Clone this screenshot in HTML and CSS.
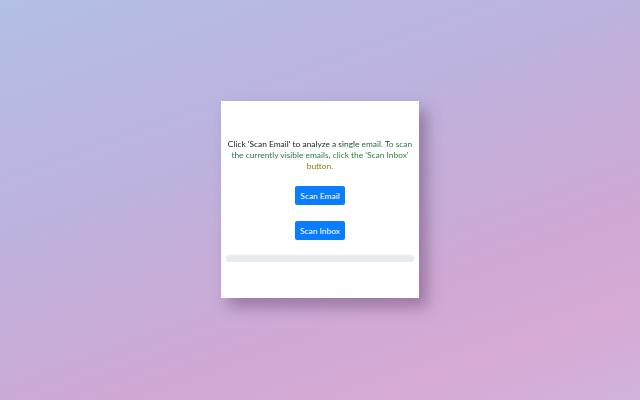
FILE: index.html
```html
<!DOCTYPE html>
<html lang="en">
<head>
    <meta charset="UTF-8">
    <title>Email Scanner</title>
    <link rel="stylesheet" href="styles.css">
</head>
<body>
    <div class="popup">
        <p class="intro">Click 'Scan Email' to analyze a single email. To scan the currently visible emails, click the 'Scan Inbox' button.</p>
        <div class="actions">
            <button class="btn">Scan Email</button>
            <button class="btn">Scan Inbox</button>
        </div>
        <div class="progress"></div>
    </div>
</body>
</html>
```

FILE: styles.css
```css
html, body {
    height: 100%;
}
body {
    margin: 0;
    font-family: "Lato", "Noto Sans", sans-serif;
    display: flex;
    align-items: center;
    justify-content: center;
    background: linear-gradient(160deg, #b3bfe6 0%, #bcb3de 35%, #cfa9d4 70%, #d6aad4 85%, #d0b3dc 100%);
}
.popup {
    width: 198px;
    height: 197px;
    box-sizing: border-box;
    background-color: #fff;
    padding: 38px 5px 0;
    box-shadow: 8px 9px 14px rgba(90, 60, 100, 0.45);
    margin-top: -1px;
}
.intro {
    margin: 0;
    font-size: 8.4px;
    line-height: 11px;
    text-align: center;
    color: #1d3a2b;
    background: linear-gradient(176deg, #1a1a1a 29%, #1c6f4a 33%, #2a7a2e 62%, #857800 74%);
    -webkit-background-clip: text;
    background-clip: text;
    -webkit-text-fill-color: transparent;
}
.actions {
    display: flex;
    flex-direction: column;
    align-items: center;
    gap: 16px;
    margin-top: 14px;
}
.btn {
    width: 50px;
    height: 19px;
    padding: 0;
    border: none;
    border-radius: 2px;
    background-color: #0a7cff;
    color: #fff;
    font-family: inherit;
    font-size: 8.4px;
}
.progress {
    height: 7px;
    margin-top: 15px;
    border-radius: 4px;
    background-color: #e9ecef;
}
```
